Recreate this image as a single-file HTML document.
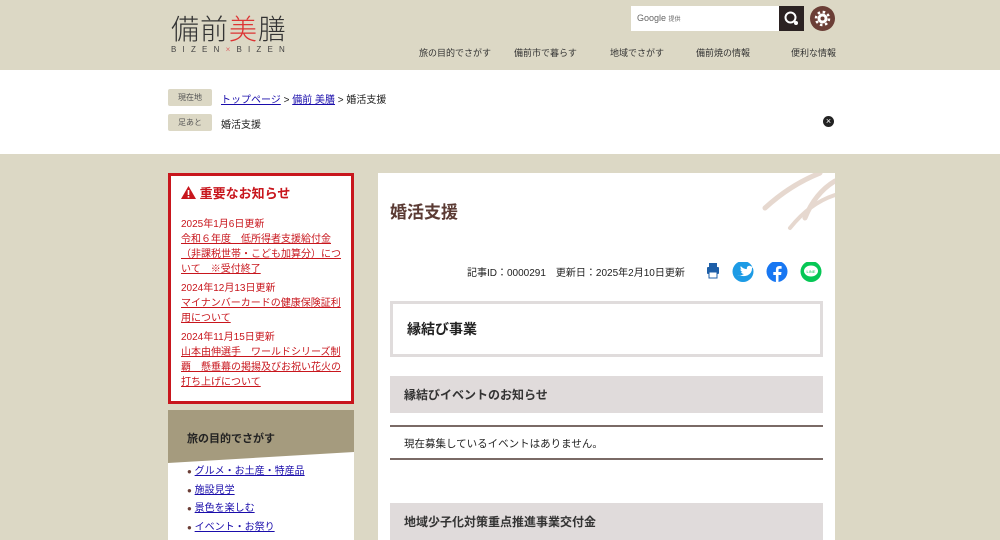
<!DOCTYPE html>
<html><head><meta charset="utf-8"><style>
*{margin:0;padding:0;box-sizing:border-box}
body{width:1000px;height:540px;overflow:hidden;background:#dcd8c5;font-family:"Liberation Sans","Noto Sans CJK JP",sans-serif;color:#222;position:relative;font-size:10px}
.a{position:absolute}
a{color:#1a0dab}
.b{color:#6b3e36;font-size:8px}
</style></head><body>
<div class="a" style="left:171px;top:12px;font-size:28px;letter-spacing:1px;color:#333;font-family:'Noto Sans CJK JP',sans-serif;font-weight:300;line-height:32px">備前<span style="color:#d33">美</span>膳</div>
<div class="a" style="left:171px;top:45px;font-size:8px;letter-spacing:6.2px;color:#444">BIZEN<span style="color:#d66">×</span>BIZEN</div>
<div class="a" style="left:631px;top:6px;width:148px;height:25px;background:#fff;font-size:9px;color:#666;padding:7px 6px">Google <span style="font-size:6px">提供</span></div>
<div class="a" style="left:779px;top:6px;width:25px;height:25px;background:#2b2222"><svg width="25" height="25"><circle cx="11.5" cy="11.5" r="5" fill="none" stroke="#fff" stroke-width="2"/><circle cx="17" cy="17" r="2" fill="#fff"/></svg></div>
<div class="a" style="left:810px;top:6px;width:25px;height:25px;border-radius:50%;background:#6b3e36"><svg width="25" height="25"><circle cx="12.5" cy="12.5" r="5" fill="#fff"/><circle cx="12.5" cy="12.5" r="6.5" fill="none" stroke="#fff" stroke-width="2.5" stroke-dasharray="2.5 2.6"/><circle cx="12.5" cy="12.5" r="2" fill="#6b3e36"/></svg></div>
<div class="a" style="top:46px;left:419px;font-size:9px;color:#333;white-space:nowrap">旅の目的でさがす</div>
<div class="a" style="top:46px;left:514px;font-size:9px;color:#333">備前市で暮らす</div>
<div class="a" style="top:46px;left:610px;font-size:9px;color:#333">地域でさがす</div>
<div class="a" style="top:46px;left:696px;font-size:9px;color:#333">備前焼の情報</div>
<div class="a" style="top:46px;left:791px;font-size:9px;color:#333">便利な情報</div>

<div class="a" style="left:0;top:70px;width:1000px;height:84px;background:#fff"></div>
<div class="a" style="left:168px;top:89px;width:44px;height:17px;background:#dcd8c5;border-radius:2px;font-size:8px;color:#555;text-align:center;line-height:17px">現在地</div>
<div class="a" style="left:221px;top:91px;font-size:10px"><a href="#">トップページ</a> &gt; <a href="#">備前 美膳</a> &gt; 婚活支援</div>
<div class="a" style="left:168px;top:114px;width:44px;height:17px;background:#dcd8c5;border-radius:2px;font-size:8px;color:#555;text-align:center;line-height:17px">足あと</div>
<div class="a" style="left:221px;top:116px;font-size:10px">婚活支援</div>
<div class="a" style="left:823px;top:116px;width:11px;height:11px;border-radius:50%;background:#222;color:#fff;font-size:9px;line-height:11px;text-align:center">×</div>

<div class="a" style="left:168px;top:173px;width:186px;height:231px;background:#fff;border:3px solid #c8161d;padding:10px 10px;color:#c8161d;font-size:10px;line-height:15px">
<div style="font-size:13px;font-weight:bold;margin-bottom:16px"><svg width="15" height="13" style="vertical-align:-1px"><path d="M7.5 0 L15 13 L0 13Z" fill="#c8161d"/><rect x="6.7" y="4" width="1.6" height="5" fill="#fff"/><rect x="6.7" y="10" width="1.6" height="1.6" fill="#fff"/></svg> 重要なお知らせ</div>
<div>2025年1月6日更新</div><div style="text-decoration:underline;margin-bottom:4px">令和６年度　低所得者支援給付金（非課税世帯・こども加算分）について　※受付終了</div>
<div>2024年12月13日更新</div><div style="text-decoration:underline;margin-bottom:4px">マイナンバーカードの健康保険証利用について</div>
<div>2024年11月15日更新</div><div style="text-decoration:underline">山本由伸選手　ワールドシリーズ制覇　懸垂幕の掲揚及びお祝い花火の打ち上げについて</div>
</div>
<div class="a" style="left:168px;top:410px;width:186px;height:130px;background:#fff"></div>
<svg class="a" style="left:168px;top:410px" width="186" height="54"><path d="M0 0H186V42L0 53Z" fill="#a59b7e"/></svg>
<div class="a" style="left:187px;top:430px;font-size:11px;font-weight:bold;color:#222">旅の目的でさがす</div>
<div class="a" style="left:187px;top:463px;font-size:10px;line-height:18.5px">
<div><span class="b">●</span> <a href="#">グルメ・お土産・特産品</a></div><div><span class="b">●</span> <a href="#">施設見学</a></div><div><span class="b">●</span> <a href="#">景色を楽しむ</a></div><div><span class="b">●</span> <a href="#">イベント・お祭り</a></div></div>

<div class="a" style="left:378px;top:173px;width:457px;height:367px;background:#fff"></div>
<svg class="a" style="left:750px;top:173px" width="85" height="60"><g stroke="#e6d8cf" fill="none" stroke-linecap="round"><path d="M15 35 Q40 12 70 0" stroke-width="5"/><path d="M40 55 Q60 30 85 22" stroke-width="4"/><path d="M55 45 Q65 20 85 8" stroke-width="5"/></g></svg>
<div class="a" style="left:390px;top:198px;font-size:17px;font-weight:bold;color:#5a3a33">婚活支援</div>
<div class="a" style="left:467px;top:264px;font-size:10px;color:#222">記事ID：0000291　更新日：2025年2月10日更新</div>
<svg class="a" style="left:705px;top:262px" width="118" height="22"><rect x="2" y="5" width="12" height="7" rx="1" fill="#1e5fa8"/><rect x="4" y="1" width="8" height="4" fill="#1e5fa8"/><rect x="4" y="10" width="8" height="6" fill="#fff" stroke="#1e5fa8"/><circle cx="38" cy="9.5" r="10.5" fill="#1d9be5"/><path d="M32 13q4 1 7-1q-2 0-3-2q1 0 1.5-.2q-2-.6-2.2-2.6q.7.3 1.3.3q-1.8-1.5-.8-3.4q2.3 2.8 6 3q-.3-3 2.5-3.3q1.3 0 2 .8l1.5-.6l-.9 1.3l1.2-.3q-.5.7-1.1 1.1q.1 5-4.5 7.3q-3.5 1.5-8-.2z" fill="#fff"/><circle cx="72" cy="9.5" r="10.5" fill="#1877f2"/><path d="M73.5 21v-8h2.6l.4-3h-3v-2q0-1.2 1.3-1.2h1.8v-2.7q-4.8-.6-5.4 1.8q-.3 1-.3 2v2.1h-2.6v3h2.6v8z" fill="#fff"/><circle cx="106" cy="9.5" r="10.5" fill="#06c755"/><ellipse cx="106" cy="9" rx="7" ry="5.5" fill="#fff"/><text x="106" y="11" font-size="4" text-anchor="middle" fill="#06c755" font-family="Liberation Sans">LINE</text></svg>
<div class="a" style="left:390px;top:301px;width:433px;height:56px;border:3px solid #e0dcdc;padding:15px 14px;font-size:14px;font-weight:bold;color:#222">縁結び事業</div>
<div class="a" style="left:390px;top:376px;width:433px;height:37px;background:#e0dbdb;padding:10px 14px;font-size:12px;font-weight:bold;color:#333">縁結びイベントのお知らせ</div>
<div class="a" style="left:390px;top:425px;width:433px;height:35px;border-top:2px solid #7a6a66;border-bottom:2px solid #7a6a66;padding:9px 14px;font-size:10.5px;color:#222">現在募集しているイベントはありません。</div>
<div class="a" style="left:390px;top:503px;width:433px;height:37px;background:#e0dbdb;padding:10px 14px;font-size:12px;font-weight:bold;color:#333">地域少子化対策重点推進事業交付金</div>
</body></html>
